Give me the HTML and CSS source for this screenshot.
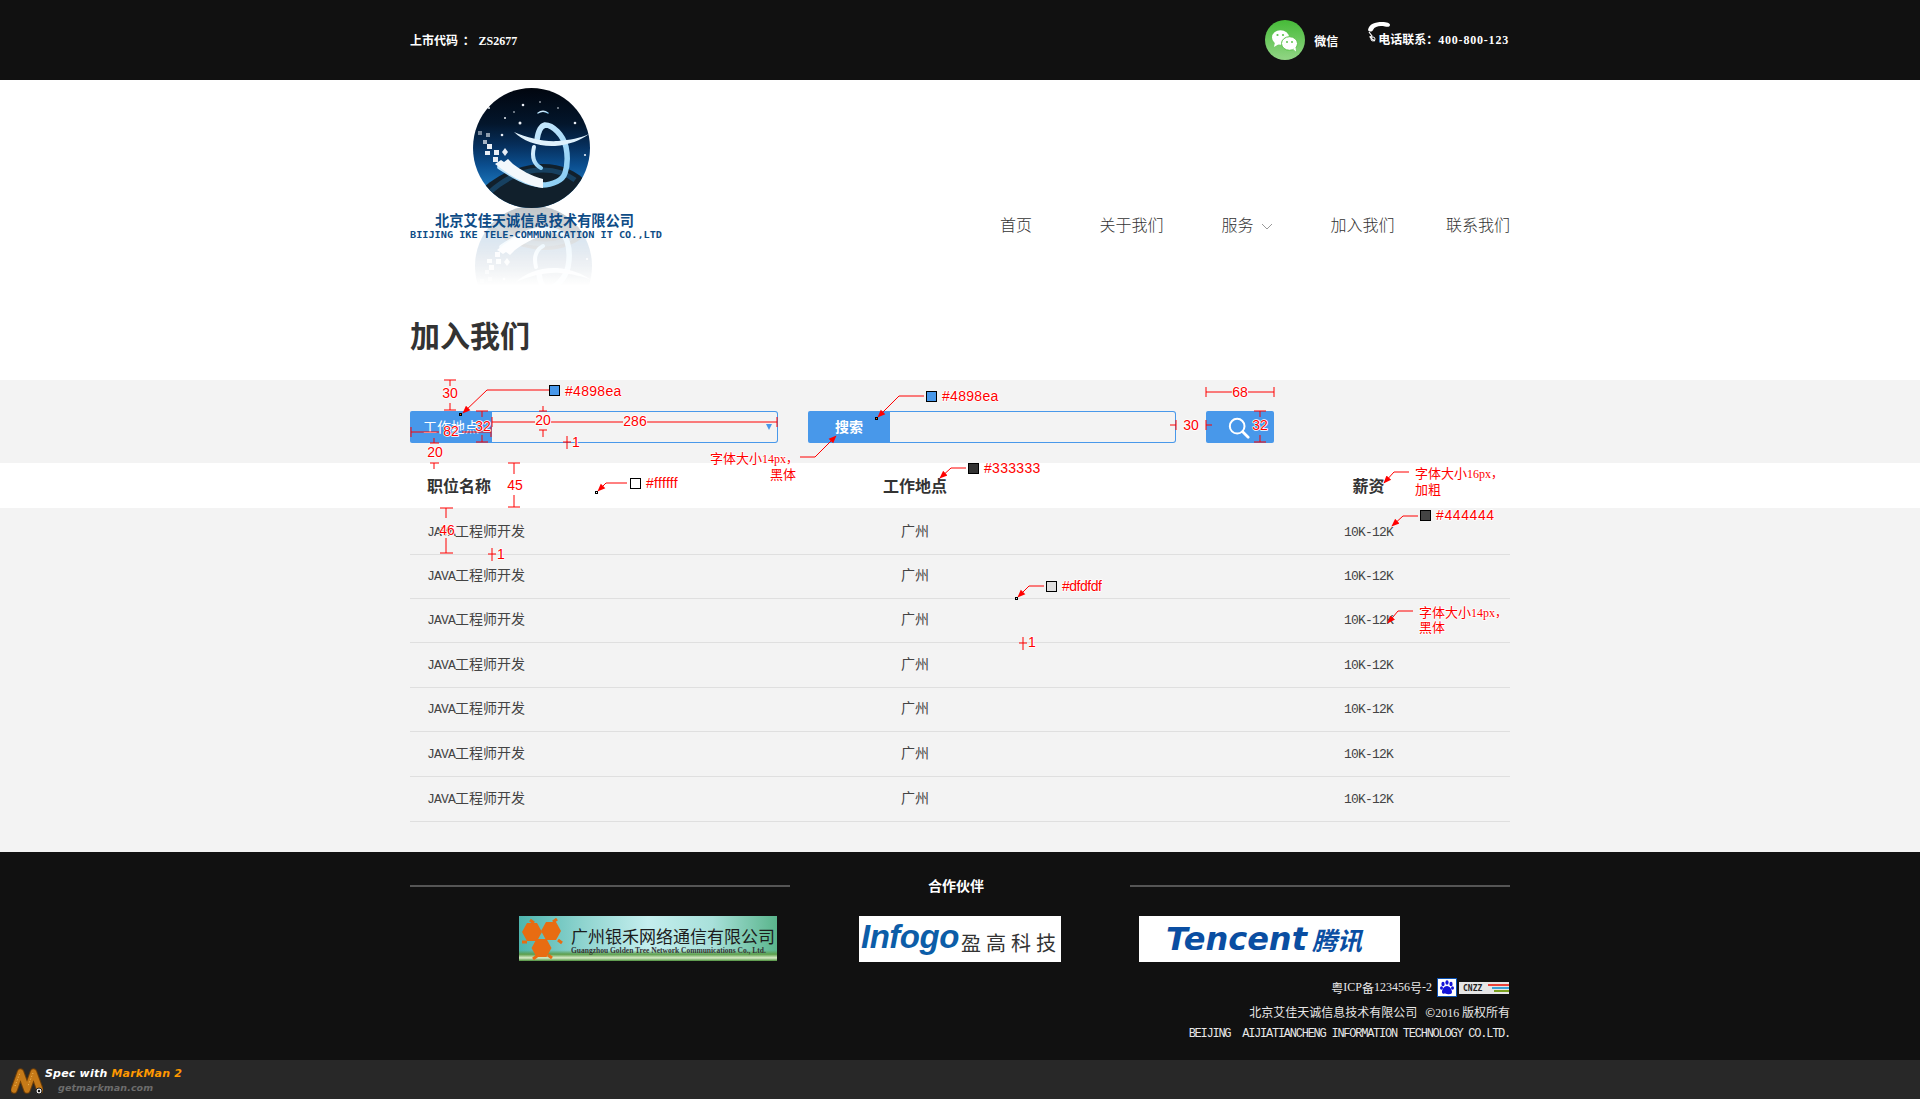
FILE: index.html
```html
<!DOCTYPE html>
<html lang="zh-CN">
<head>
<meta charset="utf-8">
<title>加入我们</title>
<link rel="stylesheet" href="styles.css">
</head>
<body>
<header class="topbar">
  <div class="wrap topbar-inner">
    <div class="stock">上市代码 <span class="colon">：</span> <span class="serif-b">ZS2677</span></div>
    <div class="contact">
      <svg class="wechat" viewBox="0 0 40 40">
        <defs><linearGradient id="wg" x1="0" y1="0" x2="0" y2="1"><stop offset="0" stop-color="#46bb38"/><stop offset="1" stop-color="#92d585"/></linearGradient></defs>
        <circle cx="20" cy="20" r="20" fill="url(#wg)"/>
        <ellipse cx="15.5" cy="17.5" rx="8.5" ry="7.3" fill="#fff"/>
        <path d="M10 22l-1 5 5-3z" fill="#fff"/>
        <ellipse cx="24.5" cy="23.5" rx="8" ry="6.8" fill="#fff" stroke="#5cc44c" stroke-width="1"/>
        <path d="M28 29l3 2.500-.5-4.500z" fill="#fff"/>
        <circle cx="12.500" cy="15" r="1.100" fill="#5cc44c"/><circle cx="18" cy="15" r="1.100" fill="#5cc44c"/>
        <circle cx="22" cy="22" r="1" fill="#5cc44c"/><circle cx="27" cy="22" r="1" fill="#5cc44c"/>
      </svg>
      <span class="wechat-label">微信</span>
      <svg class="phone" viewBox="0 0 24 22">
        <path d="M1 9C2 3 8 1 15 1c5 0 8 1 8 3s-3 2-5 1.500C13 4.500 8 5 6 9c-1 2-4 2-5 0z" fill="#fff"/>
        <path d="M2 11l3 4-2 1 2 2 3 2" fill="none" stroke="#fff" stroke-width="1.200"/>
        <circle cx="6" cy="18" r="2" fill="none" stroke="#fff"/>
      </svg>
      <span class="tel">电话联系：<span class="serif-b tel-num">400-800-123</span></span>
    </div>
  </div>
</header>

<div class="wrap brand">
  <svg class="logo" viewBox="0 0 253 220" role="img" aria-label="北京艾佳天诚信息技术有限公司">
    <defs>
      <linearGradient id="sky" x1="0" y1="0" x2="0" y2="1">
        <stop offset="0" stop-color="#01060f"/><stop offset=".3" stop-color="#03162c"/><stop offset=".48" stop-color="#062f5c"/><stop offset=".65" stop-color="#0b4f90"/><stop offset=".82" stop-color="#1b74b8"/><stop offset="1" stop-color="#1b74b8"/>
      </linearGradient>
      <linearGradient id="sym" x1="0" y1="0" x2="1" y2="1"><stop offset="0" stop-color="#dff2ff"/><stop offset="1" stop-color="#86ccf4"/></linearGradient>
      <linearGradient id="fade" gradientUnits="userSpaceOnUse" x1="0" y1="126" x2="0" y2="206"><stop offset="0" stop-color="#fff" stop-opacity=".26"/><stop offset="1" stop-color="#fff" stop-opacity="0"/></linearGradient>
      <mask id="refl" maskUnits="userSpaceOnUse" x="0" y="120" width="253" height="100"><rect x="0" y="120" width="253" height="100" fill="url(#fade)"/></mask>
      <clipPath id="disc"><ellipse cx="121.500" cy="68" rx="58.500" ry="60"/></clipPath>
      <g id="emblem">
        <ellipse cx="121.500" cy="68" rx="58.500" ry="60" fill="url(#sky)"/>
        <g clip-path="url(#disc)">
          <path d="M60 125C75 97 110 84 133 84c20 0 35 7 50 24v30H60z" fill="#11202c"/>
          <path d="M80 112C98 96 114 90 133 90c12 0 24 4 32 10" fill="none" stroke="#1d5d8e" stroke-width="5" opacity=".55"/>
        </g>
        <g fill="#e9eef5">
          <rect x="68" y="51" width="4" height="4" opacity=".5"/><rect x="76" y="53" width="4" height="4" opacity=".6"/><rect x="73" y="60" width="4" height="4" opacity=".7"/><rect x="77" y="64" width="5" height="5"/><rect x="84" y="70" width="5" height="5"/><rect x="75" y="71" width="5" height="4"/><rect x="83" y="77" width="5" height="5"/><path d="M95 68l3 4-3 4-3-4z"/>
          <circle cx="113" cy="25" r="1.300"/><circle cx="110" cy="43" r="1.500"/><circle cx="165" cy="43" r="1.300"/><circle cx="175" cy="75" r="1.100"/><circle cx="92" cy="55" r="1.300"/><circle cx="79" cy="28" r="1"/><circle cx="95" cy="38" r="1"/><circle cx="130" cy="22" r=".8"/><circle cx="148" cy="28" r=".8"/><circle cx="104" cy="32" r=".8"/>
        </g>
        <g fill="none" stroke="url(#sym)" stroke-linecap="round">
          <path d="M127 60c1-8 4-14 8-15 8 0 18 10 21 22 2 10 1 20-1 26-2 7-12 12-23 12-15-1-28-9-42-18" stroke-width="5.500"/>
          <path d="M124 67c-2 8-2 16 7 21" stroke-width="4"/>
          <path d="M133 38v6" stroke-width="3"/>
          <path d="M128 33c3-2 7-2 10 0" stroke-width="1.400"/>
        </g>
        <path d="M104 52c14 6 30 10 44 9 12-1 22-3 31-7-8 6-20 11-34 12-16 1-32-5-41-14z" fill="#dff1fc"/>
        <path d="M85 84l6-4 3 2 4-3 5 5c8 6 18 12 30 15v9c-18-3-34-13-48-24z" fill="#f3f8fc"/>
      </g>
    </defs>
    <g mask="url(#refl)"><use href="#emblem" transform="translate(2 254) scale(1 -1)"/></g>
    <use href="#emblem"/>
    <text class="logo-cn" x="25" y="146" textLength="199" lengthAdjust="spacingAndGlyphs">北京艾佳天诚信息技术有限公司</text>
    <text class="logo-en" x="0" y="158" textLength="252" lengthAdjust="spacingAndGlyphs">BIIJING IKE TELE-COMMUNICATION IT CO.,LTD</text>
  </svg>
  <nav class="nav">
    <a class="nav-item">首页</a>
    <a class="nav-item">关于我们</a>
    <a class="nav-item">服务<svg class="chev" viewBox="0 0 12 8"><path d="M1 1l5 5 5-5" fill="none" stroke="#999" stroke-width="1"/></svg></a>
    <a class="nav-item">加入我们</a>
    <a class="nav-item">联系我们</a>
  </nav>
</div>

<div class="wrap"><h1 class="page-title">加入我们</h1></div>

<main>
  <section class="filters">
    <div class="wrap filters-inner">
      <div class="field">
        <span class="field-label">工作地点</span>
        <span class="field-box"><i class="caret"></i></span>
      </div>
      <div class="field">
        <span class="field-label strong">搜索</span>
        <span class="field-box"></span>
      </div>
      <button class="search-btn" type="button" aria-label="搜索">
        <svg viewBox="0 0 24 24" class="search-ico"><circle cx="10" cy="10" r="8" fill="none" stroke="#fff" stroke-width="2.200"/><path d="M16 16l6 6" stroke="#fff" stroke-width="3" stroke-linecap="round"/></svg>
      </button>
    </div>
  </section>

  <div class="thead">
    <div class="wrap grid-row">
      <div>职位名称</div><div class="c">工作地点</div><div class="c">薪资</div>
    </div>
  </div>

  <section class="tbody">
    <div class="wrap">
      <div class="grid-row row row-first"><div><span class="latin">JAVA</span>工程师开发</div><div class="c">广州</div><div class="c"><span class="latin">10K-12K</span></div></div>
      <div class="grid-row row"><div><span class="latin">JAVA</span>工程师开发</div><div class="c">广州</div><div class="c"><span class="latin">10K-12K</span></div></div>
      <div class="grid-row row"><div><span class="latin">JAVA</span>工程师开发</div><div class="c">广州</div><div class="c"><span class="latin">10K-12K</span></div></div>
      <div class="grid-row row row-tall"><div><span class="latin">JAVA</span>工程师开发</div><div class="c">广州</div><div class="c"><span class="latin">10K-12K</span></div></div>
      <div class="grid-row row"><div><span class="latin">JAVA</span>工程师开发</div><div class="c">广州</div><div class="c"><span class="latin">10K-12K</span></div></div>
      <div class="grid-row row row-tall"><div><span class="latin">JAVA</span>工程师开发</div><div class="c">广州</div><div class="c"><span class="latin">10K-12K</span></div></div>
      <div class="grid-row row row-tall"><div><span class="latin">JAVA</span>工程师开发</div><div class="c">广州</div><div class="c"><span class="latin">10K-12K</span></div></div>
    </div>
  </section>
</main>

<footer class="footer">
  <div class="wrap">
    <div class="partner-title"><i class="rule"></i><span class="partner-text">合作伙伴</span><i class="rule"></i></div>
    <div class="partners">
      <div class="pt pt-gold">
        <svg class="hex" viewBox="0 0 42 42">
          <defs><polygon id="hx" points="-10,0 -5,-9 5,-9 10,0 5,9 -5,9"/></defs>
          <g fill="#e86c12"><use href="#hx" x="11" y="14"/><use href="#hx" x="30" y="13"/><use href="#hx" x="20.500" y="30"/></g>
          <path d="M9 2l4 3M36 1l-4 3M1 24h5M41 25l-4-3M12 41l4-3M31 40l-4-3" stroke="#e86c12" stroke-width="3" fill="none"/>
        </svg>
        <div class="gold-text"><div class="gold-cn">广州银禾网络通信有限公司</div><div class="gold-en">Guangzhou Golden Tree Network Communications Co., Ltd.</div></div>
      </div>
      <div class="pt pt-infogo"><span class="infogo-en">Infogo</span><span class="infogo-cn">盈高科技</span></div>
      <div class="pt pt-tencent"><span class="tencent-en">Tencent</span><span class="tencent-cn">腾讯</span></div>
    </div>
    <div class="legal">
      <div class="legal-line icp">粤<span class="serif">ICP</span>备<span class="serif">123456</span>号<span class="serif">-2</span>
        <svg class="baidu" viewBox="0 0 20 19"><rect x=".5" y=".5" width="19" height="18" fill="#fff" stroke="#0a4fb0"/><g fill="#1414d8"><ellipse cx="6" cy="6" rx="1.600" ry="2.200"/><ellipse cx="10" cy="4.500" rx="1.600" ry="2.200"/><ellipse cx="14" cy="6" rx="1.600" ry="2.200"/><ellipse cx="4.500" cy="10" rx="1.500" ry="1.800"/><ellipse cx="15.500" cy="10" rx="1.500" ry="1.800"/><path d="M10 8c3 0 5 4 5 6s-2 2.500-5 2-5 .5-5-2 2-6 5-6z"/></g></svg>
        <svg class="cnzz" viewBox="0 0 50 12"><rect width="50" height="12" fill="#e6e6e6"/><text class="cnzz-text" x="4" y="9">CNZZ</text><rect x="29" y="2" width="21" height="2" fill="#e8423a"/><rect x="33" y="5" width="17" height="2" fill="#3aa0d8"/><rect x="35" y="8" width="15" height="2" fill="#7aa020"/></svg>
      </div>
      <div class="legal-line legal-2">北京艾佳天诚信息技术有限公司   ©<span class="serif">2016</span> 版权所有</div>
      <div class="legal-line mono-legal">BEIJING  AIJIATIANCHENG INFORMATION TECHNOLOGY CO.LTD.</div>
    </div>
  </div>
</footer>

<div class="markman">
  <svg class="mm-ico" viewBox="0 0 32 27">
    <path d="M3 23L9.500 5 16 23M16 23L22.500 5 29 23" fill="none" stroke="#6e3e08" stroke-width="7.500" stroke-linecap="round" stroke-linejoin="round"/>
    <path d="M3 23L9.500 5 16 23M16 23L22.500 5 29 23" fill="none" stroke="#c67a18" stroke-width="5.500" stroke-linecap="round" stroke-linejoin="round"/>
    <path d="M4 19L9 6M22 6l-5 13" fill="none" stroke="#f4c060" stroke-width="1" stroke-dasharray="1 2"/>
    <circle cx="28" cy="24" r="3" fill="#eee" stroke="#222"/><circle cx="28" cy="24" r="1.200" fill="#111"/>
  </svg>
  <div class="mm-text">
    <div class="mm-l1">Spec with <span class="mm-orange">MarkMan 2</span></div>
    <div class="mm-l2">getmarkman.com</div>
  </div>
</div>

<svg class="spec" viewBox="0 0 1920 1099" aria-label="标注">
  <defs>
    <marker id="ah" viewBox="0 0 10 10" refX="9" refY="5" markerWidth="8" markerHeight="8" orient="auto-start-reverse"><path d="M0 1L10 5 0 9z" fill="#f00"/></marker>
  </defs>
  <g class="sp-line">
    <path d="M444 380h12M450 380v6M450 403v7M444 410h12"/>
    <path d="M476 411h12M482 411v6M482 435v7M476 442h12"/>
    <path d="M411 427v10M411 432h28M462 432h29M491 427v10"/>
    <path d="M430 443h9M434 438v5M430 463h9M434 463v6"/>
    <path d="M539 411h8M543 406v5M539 430h8M543 430v7"/>
    <path d="M492 417v10M492 422h43M551 422h72M647 422h130M777 417v10"/>
    <path d="M567 436v13M563 442h8"/>
    <path d="M1206 387v10M1206 392h26M1248 392h26M1274 387v10"/>
    <path d="M1170 425h6M1176 420v10M1206 420v10M1206 425h6"/>
    <path d="M1254 411h12M1260 411v6M1260 435v7M1254 442h12"/>
    <path d="M508 463h12M514 463v11M514 495v12M508 507h12"/>
    <path d="M440 508h13M446 508v10M446 538v15M440 553h13"/>
    <path d="M492 548v13M488 554h8"/>
    <path d="M1023 637v13M1019 643h8"/>
  </g>
  <g class="sp-line">
    <polyline points="549,390 487,390 463,413" marker-end="url(#ah)"/>
    <polyline points="924,396 899,396 878,417" marker-end="url(#ah)"/>
    <polyline points="800,457 815,457 836,436" marker-end="url(#ah)"/>
    <polyline points="966,468 951,468 940,478" marker-end="url(#ah)"/>
    <polyline points="627,483 606,483 598,491" marker-end="url(#ah)"/>
    <polyline points="1044,586 1029,586 1018,597" marker-end="url(#ah)"/>
    <polyline points="1409,472 1394,472 1384,483" marker-end="url(#ah)"/>
    <polyline points="1418,516 1403,516 1392,526" marker-end="url(#ah)"/>
    <polyline points="1413,611 1398,611 1388,623" marker-end="url(#ah)"/>
  </g>
  <g class="sp-sw">
    <rect x="549.500" y="385.500" width="10" height="10" fill="#4898ea"/>
    <rect x="926.500" y="391.500" width="10" height="10" fill="#4898ea"/>
    <rect x="968.500" y="463.500" width="10" height="10" fill="#333"/>
    <rect x="630.500" y="478.500" width="10" height="10" fill="#fff"/>
    <rect x="1046.500" y="581.500" width="10" height="10" fill="#dfdfdf"/>
    <rect x="1420.500" y="510.500" width="10" height="10" fill="#444"/>
    <rect x="459.500" y="413.500" width="2" height="2" fill="#f60"/>
    <rect x="875.500" y="417.500" width="2" height="2" fill="#f60"/>
    <rect x="595.500" y="491.500" width="2" height="2" fill="#fff"/>
    <rect x="1015.500" y="597.500" width="2" height="2" fill="#dfdfdf"/>
  </g>
  <g class="sp-t">
    <text x="450" y="398" text-anchor="middle">30</text>
    <text x="451" y="436" text-anchor="middle">82</text>
    <text x="483" y="431" text-anchor="middle">32</text>
    <text x="435" y="457" text-anchor="middle">20</text>
    <text x="543" y="425" text-anchor="middle">20</text>
    <text x="635" y="426" text-anchor="middle">286</text>
    <text x="572" y="447">1</text>
    <text x="565" y="396" class="sp-hex">#4898ea</text>
    <text x="942" y="401" class="sp-hex">#4898ea</text>
    <text x="1240" y="397" text-anchor="middle">68</text>
    <text x="1191" y="430" text-anchor="middle">30</text>
    <text x="1260" y="430" text-anchor="middle">32</text>
    <text x="984" y="473" class="sp-hex">#333333</text>
    <text x="646" y="488" class="sp-hex">#ffffff</text>
    <text x="515" y="490" text-anchor="middle">45</text>
    <text x="447" y="535" text-anchor="middle">46</text>
    <text x="497" y="559">1</text>
    <text x="1028" y="647">1</text>
    <text x="1062" y="591" class="sp-thin">#dfdfdf</text>
    <text x="1436" y="520" class="sp-wide">#444444</text>
  </g>
  <g class="sp-t sp-cn">
    <text x="710" y="463">字体大小<tspan class="sp-sm">14px，</tspan></text>
    <text x="770" y="479">黑体</text>
    <text x="1415" y="478">字体大小<tspan class="sp-sm">16px，</tspan></text>
    <text x="1415" y="494">加粗</text>
    <text x="1419" y="617">字体大小<tspan class="sp-sm">14px，</tspan></text>
    <text x="1419" y="632">黑体</text>
  </g>
</svg>
</body>
</html>
```

FILE: styles.css
```css
* { box-sizing: border-box; }
html, body { margin: 0; padding: 0; }
body {
  position: relative;
  width: 1920px;
  height: 1099px;
  overflow: hidden;
  background: #fff;
  font-family: "Noto Sans CJK SC", "Liberation Sans", sans-serif;
  color: #444;
}
.wrap { width: 1100px; margin-left: 410px; }

/* top bar */
.topbar { height: 80px; background: #111; color: #fff; font-size: 12px; font-weight: 700; }
.topbar-inner { height: 100%; display: flex; align-items: center; justify-content: space-between; }
.stock { white-space: pre; }
.colon { display: inline-block; width: 12px; text-align: center; margin-left: 2px; margin-right: 1px; }
.serif-b { font-family: "Liberation Serif", serif; font-weight: 700; font-size: 12px; }
.tel-num { letter-spacing: .8px; }
.contact { display: flex; align-items: center; margin-left: auto; }
.wechat { width: 40px; height: 40px; }
.wechat-label { margin-left: 9px; width: 32px; }
.phone { width: 24px; height: 22px; margin-left: 21px; margin-right: -13px; margin-bottom: 16px; }
.tel { margin-bottom: 3px; position: relative; margin-right: 1px; }

/* brand */
.brand { height: 220px; position: relative; display: flex; justify-content: space-between; }
.logo { width: 253px; height: 220px; display: block; }
.logo-cn { font-size: 15px; font-weight: 700; fill: #0e4c86; }
.logo-en { font-family: "DejaVu Sans Mono", monospace; font-size: 9px; font-weight: 700; fill: #0e4c86; }
.nav { display: flex; margin-right: -25.750px; height: 30px; margin-top: 129px; }
.nav-item { width: 115.500px; font-size: 16px; line-height: 30px; text-align: center; color: #333; font-weight: 300; white-space: nowrap; }
.chev { width: 12px; height: 8px; margin-left: 7px; }

.page-title { margin: 0; height: 40px; margin-top: 14px; margin-bottom: 26px; font-size: 30px; line-height: 40px; font-weight: 700; color: #333; }

/* filters */
.filters { background: #f3f3f3; height: 83px; padding-top: 31px; }
.filters-inner { display: flex; gap: 30px; height: 32px; }
.field { width: 368px; height: 32px; display: flex; }
.field-label {
  width: 82px; background: #4898ea; color: #fff; font-size: 14px; line-height: 31px; text-align: center;
  border-radius: 2px 0 0 2px;
}
.field-label.strong { font-weight: 700; }
.field-box {
  width: 286px; position: relative; border: 1px solid #4898ea; border-left: 0; border-radius: 0 3px 3px 0;
  display: flex; align-items: center; justify-content: flex-end; padding-right: 5px;
}
.caret { width: 0; height: 0; border-left: 3.500px solid transparent; border-right: 3.500px solid transparent; border-top: 6px solid #4898ea; }
.search-btn {
  width: 68px; height: 32px; padding: 6px 0 0 22px; border: 0; border-radius: 2px; background: #4898ea; display: flex; align-items: flex-start;
}
.search-ico { width: 22px; height: 22px; display: block; }

/* table */
.grid-row { display: grid; grid-template-columns: 193px 624px 283px; align-items: center; }
.grid-row > div:first-child { padding-left: 17px; }
.c { text-align: center; }
.thead { background: #fff; height: 45px; font-size: 16px; font-weight: 700; color: #333; }
.thead .grid-row { height: 45px; padding-bottom: 2px; }
.tbody { background: #f3f3f3; height: 344px; }
.row { height: 44px; border-bottom: 1px solid #dfdfdf; font-size: 14px; color: #444; padding-bottom: 5px; }
.row-first { height: 47px; padding-bottom: 2px; }
.row-tall { height: 45px; }
.latin { font-family: "Liberation Mono", monospace; font-size: 13px; letter-spacing: -.8px; }

/* footer */
.footer { background: #111; height: 208px; padding-top: 24px; color: #fff; }
.partner-title { height: 20px; display: flex; align-items: center; margin-bottom: 20px; }
.rule { width: 380px; height: 2px; background: #555; }
.partner-text { width: 340px; padding: 0 8px 2px 0; text-align: center; font-size: 14px; font-weight: 700; line-height: 20px; }
.partners { display: flex; height: 46px; padding-left: 109px; }
.pt { height: 46px; display: flex; overflow: hidden; }
.pt-gold {
  width: 258px; height: 45px; margin-right: 82px; align-items: center;
  background:
    linear-gradient(180deg, rgba(90,160,70,0) 76%, #5c9e4c 85%, #d8ecc8 93%, #4b8f3b 100%),
    linear-gradient(90deg, #4db5ae 0%, #8fd4cf 25%, #c4eeee 50%, #a8e0da 75%, #5ab58c 100%);
}
.hex { width: 42px; height: 42px; margin-left: 2px; flex: none; }
.gold-text { margin-left: 8px; color: #1c1c1c; white-space: nowrap; width: 204px; }
.gold-cn { font-size: 17px; line-height: 20px; margin-top: 4px; }
.gold-en { font-family: "Liberation Serif", serif; font-size: 7.500px; line-height: 9px; color: #333; font-weight: 700; overflow: hidden; }
.pt-infogo { width: 202px; margin-right: 78px; background: #fff; align-items: center; padding-left: 2px; }
.infogo-en { font-family: "Liberation Sans", sans-serif; font-style: italic; font-weight: 700; font-size: 33px; line-height: 40px; color: #0c5da8; letter-spacing: -.5px; margin-top: -4px; width: 101px; }
.infogo-cn { font-size: 20px; color: #333; letter-spacing: 5px; margin-top: 7px; white-space: nowrap; }
.pt-tencent { width: 261px; background: #fff; align-items: center; padding-left: 27px; }
.tencent-en { font-family: "DejaVu Sans", sans-serif; font-style: italic; font-weight: 700; font-size: 32px; color: #0a4ea2; line-height: 40px; letter-spacing: 0; }
.tencent-cn { font-size: 25px; font-style: italic; font-weight: 700; color: #0a4ea2; margin-left: 5px; }

.legal { padding-top: 16px; font-size: 12px; text-align: right; color: #e8e8e8; }
.legal-line { height: 20px; line-height: 20px; white-space: pre; }
.legal-2 { height: 22px; }
.icp { height: 24px; display: flex; justify-content: flex-end; align-items: flex-start; line-height: 19px; }
.serif { font-family: "Liberation Serif", serif; }
.mono-legal { font-family: "Liberation Mono", monospace; letter-spacing: -1.250px; }
.baidu { width: 20px; height: 19px; margin-left: 5px; }
.cnzz { width: 50px; height: 12px; margin: 4px 1px 0 2px; }
.cnzz-text { font-family: "DejaVu Sans Mono", monospace; font-size: 8px; font-weight: 700; fill: #222; }

/* markman bar */
.markman { height: 39px; background: #282828; display: flex; padding: 7px 0 0 11px; }
.mm-ico { width: 32px; height: 27px; flex: none; }
.mm-text { margin-left: 2px; font-family: "DejaVu Sans", sans-serif; font-style: italic; font-weight: 700; }
.mm-l1 { font-size: 11px; line-height: 14px; color: #fff; letter-spacing: .2px; white-space: nowrap; }
.mm-orange { color: #f90; }
.mm-l2 { font-size: 9.500px; line-height: 13px; color: #6c6c6c; padding-left: 13px; letter-spacing: .1px; }

/* spec annotation overlay */
.spec { position: absolute; left: 0; top: 0; width: 1920px; height: 1099px; pointer-events: none; }
.sp-line path, .sp-line polyline { fill: none; stroke: #f00; stroke-width: 1; }
.sp-sw rect { stroke: #000; stroke-width: 1; }
.sp-t text {
  font-family: "Liberation Sans", sans-serif; font-size: 14px; fill: #f00;
  paint-order: stroke; stroke: #fff; stroke-width: 1.500px; stroke-linejoin: round;
}
.sp-t .sp-hex { letter-spacing: .3px; }
.sp-t .sp-thin { letter-spacing: -.5px; }
.sp-t .sp-wide { letter-spacing: .6px; }
.sp-cn text { font-family: "Noto Sans CJK SC", sans-serif; font-size: 13px; }
.sp-sm { font-family: "Liberation Serif", serif; font-size: 12px; }
```
